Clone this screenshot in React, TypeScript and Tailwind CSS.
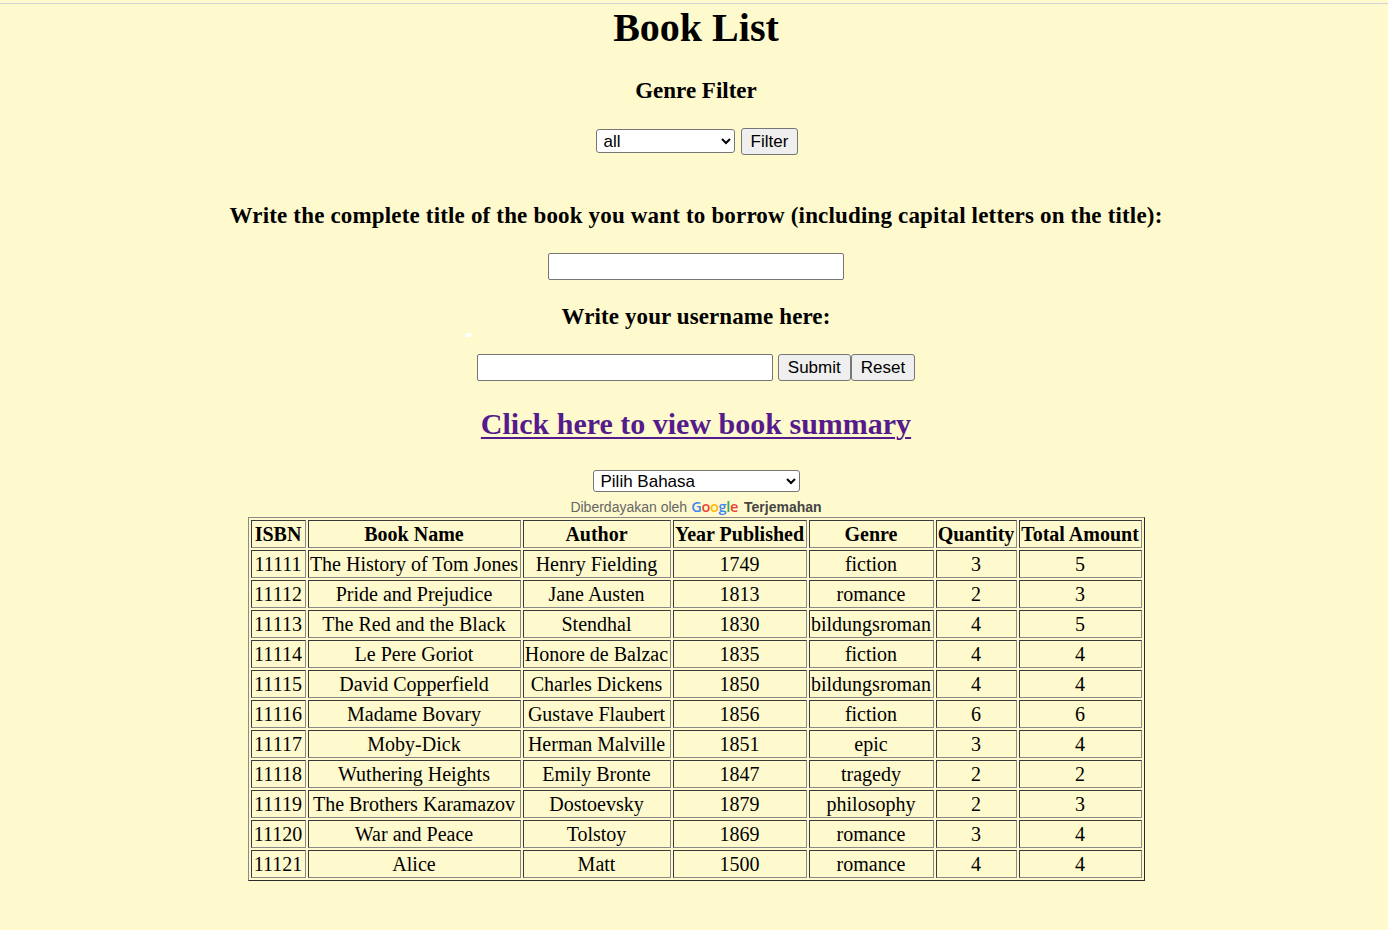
import React from 'react';

type Book = {
  isbn: string;
  name: string;
  author: string;
  year: string;
  genre: string;
  qty: string;
  total: string;
};

const books: Book[] = [
  { isbn: '11111', name: 'The History of Tom Jones', author: 'Henry Fielding', year: '1749', genre: 'fiction', qty: '3', total: '5' },
  { isbn: '11112', name: 'Pride and Prejudice', author: 'Jane Austen', year: '1813', genre: 'romance', qty: '2', total: '3' },
  { isbn: '11113', name: 'The Red and the Black', author: 'Stendhal', year: '1830', genre: 'bildungsroman', qty: '4', total: '5' },
  { isbn: '11114', name: 'Le Pere Goriot', author: 'Honore de Balzac', year: '1835', genre: 'fiction', qty: '4', total: '4' },
  { isbn: '11115', name: 'David Copperfield', author: 'Charles Dickens', year: '1850', genre: 'bildungsroman', qty: '4', total: '4' },
  { isbn: '11116', name: 'Madame Bovary', author: 'Gustave Flaubert', year: '1856', genre: 'fiction', qty: '6', total: '6' },
  { isbn: '11117', name: 'Moby-Dick', author: 'Herman Malville', year: '1851', genre: 'epic', qty: '3', total: '4' },
  { isbn: '11118', name: 'Wuthering Heights', author: 'Emily Bronte', year: '1847', genre: 'tragedy', qty: '2', total: '2' },
  { isbn: '11119', name: 'The Brothers Karamazov', author: 'Dostoevsky', year: '1879', genre: 'philosophy', qty: '2', total: '3' },
  { isbn: '11120', name: 'War and Peace', author: 'Tolstoy', year: '1869', genre: 'romance', qty: '3', total: '4' },
  { isbn: '11121', name: 'Alice', author: 'Matt', year: '1500', genre: 'romance', qty: '4', total: '4' },
];

// header label + cell width taken from the rendered table
const headers: { label: string; w: string }[] = [
  { label: 'ISBN', w: 'w-[55px]' },
  { label: 'Book Name', w: 'w-[213px]' },
  { label: 'Author', w: 'w-[148px]' },
  { label: 'Year Published', w: 'w-[134px]' },
  { label: 'Genre', w: 'w-[125px]' },
  { label: 'Quantity', w: 'w-[81px]' },
  { label: 'Total Amount', w: 'w-[123px]' },
];

// classic border="1" cell: inset look
const cell =
  'border border-t-[#3a3a3a] border-l-[#3a3a3a] border-b-[#8a8a8a] border-r-[#8a8a8a] p-px text-center leading-[24px] whitespace-nowrap';

const heading = "font-['Liberation_Serif',serif] text-[23px] font-bold leading-[28px] text-black";
const control = "font-['Liberation_Sans',Arial,sans-serif] text-[17px] text-black";
const btn = `${control} h-[27px] rounded-[3px] border border-[#767676] bg-[#efefef] px-[9px] leading-none`;

const App: React.FC = () => {
  return (
    <div className="relative min-h-screen bg-[#fffacd] font-['Liberation_Serif',serif] text-black">
      {/* thin line left by the hidden translate bar */}
      <div className="h-[3px]" />
      <div className="h-px bg-[#d4d4d4]" />

      <div className="flex flex-col items-center pl-[4px] pb-12">
        <h1 className="h-[48px] text-[40px] font-bold leading-[48px]">Book List</h1>

        <h3 className={`mt-[25px] ${heading}`}>Genre Filter</h3>
        <form className="mt-[23px] flex h-[26px] items-center gap-[6px] pl-[2px]">
          <select className={`${control} h-[24px] w-[139px] rounded-[3px] border border-[#767676] bg-white pl-[3px]`} defaultValue="all">
            <option value="all">all</option>
            <option value="fiction">fiction</option>
            <option value="romance">romance</option>
          </select>
          <button type="button" className={`${btn} h-[26px]`}>Filter</button>
        </form>

        <h3 className={`mt-[48px] tracking-[0.17px] ${heading}`}>
          Write the complete title of the book you want to borrow (including capital letters on the title):
        </h3>
        <input className="mt-[23px] h-[27px] w-[296px] rounded-[2px] border border-[#767676] bg-white" type="text" />

        <h3 className={`mt-[23px] tracking-[0.1px] ${heading}`}>Write your username here:</h3>
        <div className="mt-[23px] flex h-[27px] items-center">
          <input className="h-[27px] w-[296px] rounded-[2px] border border-[#767676] bg-white" type="text" />
          <button type="button" className={`${btn} ml-[5px]`}>Submit</button>
          <button type="button" className={btn}>Reset</button>
        </div>

        <a
          href="#"
          className="mt-[25px] h-[36px] text-[30px] font-bold leading-[36px] text-[#551a8b] underline decoration-[2px] underline-offset-[3px]"
        >
          Click here to view book summary
        </a>

        <select className={`${control} mt-[28px] h-[22px] w-[207px] rounded-[3px] border border-[#767676] bg-white pl-[3px] text-[16.5px] leading-[20px]`} defaultValue="">
          <option value="">Pilih Bahasa</option>
        </select>
        <div className="mt-[7px] flex h-[16px] items-center font-['Liberation_Sans',Arial,sans-serif] text-[14px] leading-[16px] text-[#666]">
          <span>Diberdayakan oleh</span>
          <span className="ml-[4px] font-['Open_Sans',sans-serif] text-[14.5px] font-semibold tracking-[-0.3px]">
            <span className="text-[#4285f4]">G</span>
            <span className="text-[#ea4335]">o</span>
            <span className="text-[#fbbc05]">o</span>
            <span className="text-[#4285f4]">g</span>
            <span className="text-[#34a853]">l</span>
            <span className="text-[#ea4335]">e</span>
          </span>
          <span className="ml-[6px] font-bold text-[#444]">Terjemahan</span>
        </div>

        <table className="mt-[2px] border-separate border-spacing-[2px] border border-t-[#8a8a8a] border-l-[#8a8a8a] border-b-[#2a2a2a] border-r-[#2a2a2a] text-[20px]">
          <thead>
            <tr>
              {headers.map((h) => (
                <th key={h.label} className={`${cell} ${h.w} font-bold`}>
                  {h.label}
                </th>
              ))}
            </tr>
          </thead>
          <tbody>
            {books.map((b) => (
              <tr key={b.isbn}>
                <td className={cell}>{b.isbn}</td>
                <td className={cell}>{b.name}</td>
                <td className={cell}>{b.author}</td>
                <td className={cell}>{b.year}</td>
                <td className={cell}>{b.genre}</td>
                <td className={cell}>{b.qty}</td>
                <td className={cell}>{b.total}</td>
              </tr>
            ))}
          </tbody>
        </table>
      </div>

      {/* stray white speck */}
      <span className="absolute left-[465px] top-[333px] h-[4px] w-[7px] rounded-full bg-white" />
    </div>
  );
};

export default App;
